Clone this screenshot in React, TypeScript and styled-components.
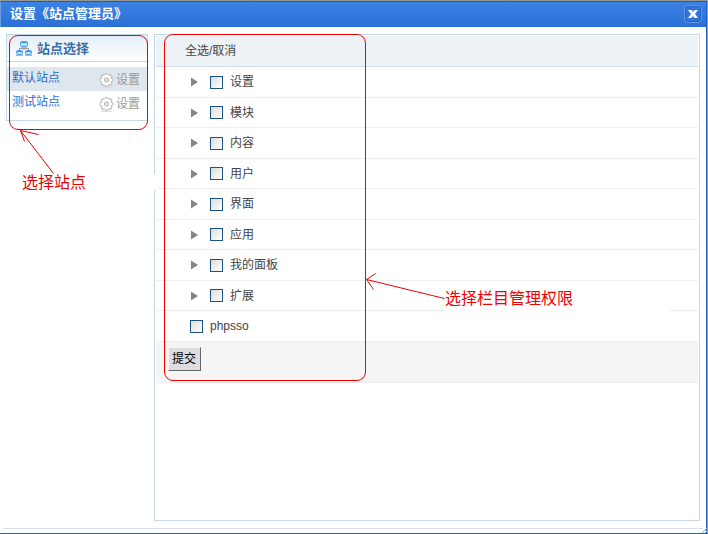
import React, { useState } from "react";
import styled, { createGlobalStyle } from "styled-components";

const GlobalStyle = createGlobalStyle`
  * { box-sizing: border-box; }
  body {
    margin: 0;
    background: #fff;
    color: #444;
    font: 12px/16px "Liberation Sans", "Noto Sans CJK SC", sans-serif;
  }
  button, input { font: inherit; margin: 0; }
`;

const Dialog = styled.main`
  position: relative;
  display: flex;
  flex-direction: column;
  min-height: 100vh;
  border-top: 1px solid #969a94;
  border-right: 1px solid #8f9fb4;
  border-bottom: 1px solid #2263b4;
  background: #fff;
  box-shadow: inset -1px 0 #1c63cd;
`;

const TitleBar = styled.header`
  display: flex;
  align-items: center;
  justify-content: space-between;
  height: 26px;
  padding: 0 4px 0 9px;
  border: 1px solid #1a5cb8;
  border-bottom: 0;
  border-left-color: #6c9ee2;
  border-right-color: #1c63cd;
  background: linear-gradient(#3b82e4, #2b6fd4);
  color: #fff;
`;

const Title = styled.h1`
  margin: 0;
  padding-bottom: 2px;
  font-size: 13px;
  line-height: 20px;
  font-weight: bold;
`;

const CloseButton = styled.button`
  display: flex;
  align-items: center;
  justify-content: center;
  width: 18px;
  height: 18px;
  margin-bottom: 2px;
  padding: 0;
  border: 1px solid #6496e4;
  border-radius: 4px;
  background: #2f74d8;
  box-shadow: inset 0 0 0 1px #2263c4;
`;

const Content = styled.div`
  flex: 1;
  display: flex;
  align-items: stretch;
  gap: 6px;
  padding: 7px 7px 7px 6px;
`;

const Sidebar = styled.nav`
  position: relative;
  align-self: flex-start;
  flex: none;
  width: 142px;
  padding-bottom: 5px;
  border: 1px solid #c5d8e8;
`;

const SidebarTitle = styled.h2`
  display: flex;
  align-items: center;
  gap: 5px;
  height: 27px;
  margin: 0 0 5px;
  padding: 2px 9px 0;
  border-bottom: 1px solid #c5d8e8;
  background: linear-gradient(#e2ecf7, #fff);
  color: #3a6ea5;
  font-size: 13px;
  line-height: 20px;
`;

const SiteRow = styled.div<{ $active?: boolean }>`
  display: flex;
  align-items: center;
  justify-content: space-between;
  height: 24px;
  padding: 0 7px 0 5px;
  background: ${(p) => (p.$active ? "#dfe7ee" : "transparent")};
`;

const SiteLink = styled.a`
  padding-bottom: 2px;
  color: #2a6fd0;
  text-decoration: none;
`;

const SettingLink = styled.a`
  display: flex;
  align-items: center;
  gap: 2px;
  padding-top: 2px;
  color: #999;
  text-decoration: none;
`;

const Panel = styled.form`
  position: relative;
  flex: 1;
  min-width: 0;
  padding: 1px;
  border: 1px solid #c5d8e8;
`;

const PanelHead = styled.div`
  display: flex;
  align-items: center;
  height: 31px;
  padding-left: 29px;
  border-bottom: 1px solid #d0dce8;
  background: #edf2f6;
`;

const PlainButton = styled.button`
  display: flex;
  padding: 0;
  border: 0;
  background: none;
  color: inherit;
`;

const Tree = styled.ul`
  margin: 0;
  padding: 0;
  list-style: none;
`;

const TreeRow = styled.li`
  display: flex;
  align-items: center;
  gap: 12px;
  height: 30px;
  padding-left: 34px;
  border-bottom: 1px solid #eee;
  &:nth-child(odd) { height: 31px; }
`;

const CheckLabel = styled.label`
  display: flex;
  align-items: center;
  gap: 7px;
`;

const CheckBox = styled.input.attrs({ type: "checkbox" })`
  appearance: none;
  width: 13px;
  height: 13px;
  border: 1px solid #1c5180;
  background: linear-gradient(135deg, #dcdcd7, #fff);
  &:checked {
    background: #21a121;
    box-shadow: inset 0 0 0 2px #fff;
  }
`;

const PanelFoot = styled.div`
  height: 41px;
  padding: 5px 12px;
  border-bottom: 1px solid #eee;
  background: #f5f5f5;
`;

const SubmitButton = styled.button`
  height: 24px;
  padding: 0 4px 0 3px;
  border: 1px solid;
  border-color: #f5f5f5 #666 #666 #f5f5f5;
  background: #ddd;
  color: #000;
`;

const StatusBar = styled.footer`
  height: 5px;
  margin: 0 4px 0 3px;
  border-top: 1px solid #d5deea;
`;

const Grip = styled.svg`
  position: absolute;
  right: 0;
  bottom: 0;
`;

const SiteOutline = styled.div`
  position: absolute;
  inset: 0 -1px -10px 2px;
  border: 1px solid #f00000;
  border-radius: 9px;
  pointer-events: none;
`;

const TreeOutline = styled.div`
  position: absolute;
  top: -1px;
  left: 9px;
  width: 202px;
  height: 347px;
  border: 1px solid #f00000;
  border-radius: 9px;
  pointer-events: none;
`;

const Note = styled.p<{ $x: number; $y: number; $w: number; $h: number }>`
  position: absolute;
  left: ${(p) => p.$x}px;
  top: ${(p) => p.$y}px;
  width: ${(p) => p.$w}px;
  height: ${(p) => p.$h}px;
  margin: 0;
  background: #fff;
  color: #f00000;
  font-size: 16px;
  line-height: 18px;
  white-space: nowrap;
`;

const Arrows = styled.svg`
  position: absolute;
  top: -1px;
  left: 0;
  pointer-events: none;
`;

const SiteIcon = () => (
  <svg width="16" height="16" viewBox="0 0 16 16" aria-hidden="true">
    <path d="M8 6v3M3.500 10V7.500h9V10" fill="none" stroke="#999" />
    <g fill="#b4e2fb" stroke="#4c9fe0">
      <rect x="4.500" y="0.500" width="7" height="5" rx="1" />
      <rect x="0.500" y="9.500" width="6" height="4" rx="1" />
      <rect x="9.500" y="9.500" width="6" height="4" rx="1" />
    </g>
    <path d="M5 1.500h6M1 10.500h5M10 10.500h5" stroke="#3d98ea" />
    <path d="M0 14.500h7M9 14.500h7M5 6.500h6" stroke="#b5b9bc" />
  </svg>
);

const teeth = [0, 45, 90, 135, 180, 225, 270, 315];

const GearIcon = () => (
  <svg width="15" height="15" viewBox="0 0 15 15" aria-hidden="true">
    <path d="M2 14.500h11" stroke="#ddd" />
    <g fill="#fff" stroke="#b4b4b4">
      {teeth.map((angle) => (
        <rect key={angle} x="6" y="0.500" width="3" height="4" rx="0.800" transform={`rotate(${angle} 7.500 7)`} />
      ))}
    </g>
    <circle cx="7.500" cy="7" r="5" fill="#fff" />
    <circle cx="7.500" cy="7" r="2.200" fill="#e2e2e2" stroke="#b8b8b8" />
  </svg>
);

const sections = ["设置", "模块", "内容", "用户", "界面", "应用", "我的面板", "扩展"];
const entries = [...sections, "phpsso"];
const sites = ["默认站点", "测试站点"];

export default function App() {
  const [checked, setChecked] = useState<string[]>([]);
  const toggle = (name: string) =>
    setChecked((now) => (now.includes(name) ? now.filter((n) => n !== name) : [...now, name]));
  const toggleAll = () => setChecked((now) => (now.length === entries.length ? [] : entries));

  return (
    <>
      <GlobalStyle />
      <Dialog>
        <TitleBar>
          <Title>设置《站点管理员》</Title>
          <CloseButton type="button" aria-label="关闭">
            <svg width="10" height="8" viewBox="0 0 10 8" aria-hidden="true">
              <path d="M0 0h3.500L5 2l1.500-2H10L7 4l3 4H6.500L5 6 3.500 8H0l3-4z" fill="#fff" />
            </svg>
          </CloseButton>
        </TitleBar>
        <Content>
          <Sidebar>
            <SidebarTitle>
              <SiteIcon />
              站点选择
            </SidebarTitle>
            {sites.map((site, i) => (
              <SiteRow key={site} $active={i === 0}>
                <SiteLink href="#">{site}</SiteLink>
                <SettingLink href="#">
                  <GearIcon />
                  设置
                </SettingLink>
              </SiteRow>
            ))}
            <SiteOutline />
          </Sidebar>
          <Panel onSubmit={(e) => e.preventDefault()}>
            <PanelHead>
              <PlainButton type="button" onClick={toggleAll}>全选/取消</PlainButton>
            </PanelHead>
            <Tree>
              {entries.map((name) => (
                <TreeRow key={name}>
                  {name !== "phpsso" && (
                    <PlainButton type="button" aria-label={"展开" + name}>
                      <svg width="8" height="10" viewBox="0 0 8 10" aria-hidden="true">
                        <path d="M1 0.500 8 5 1 9.500z" fill="#858585" />
                      </svg>
                    </PlainButton>
                  )}
                  <CheckLabel>
                    <CheckBox checked={checked.includes(name)} onChange={() => toggle(name)} />
                    {name}
                  </CheckLabel>
                </TreeRow>
              ))}
            </Tree>
            <PanelFoot>
              <SubmitButton type="submit">提交</SubmitButton>
            </PanelFoot>
            <TreeOutline />
          </Panel>
        </Content>
        <StatusBar />
        <Grip width="5" height="5" viewBox="0 0 5 5" aria-hidden="true">
          <path d="M0 5 5 0M3 5 5 3" stroke="#8ea4cf" />
        </Grip>
        <Note $x={22} $y={173} $w={137} $h={16}>选择站点</Note>
        <Note $x={445} $y={289} $w={225} $h={22}>选择栏目管理权限</Note>
        <Arrows width="450" height="310" viewBox="0 0 450 310" aria-hidden="true">
          <g fill="none" stroke="#f00000">
            <path d="M53.500 173.500 20.500 130.500M24.500 141.500l-4-11 18 4" />
            <path d="M444.500 298.500l-78-19M375.500 273.500l-9 6 7 10" />
          </g>
        </Arrows>
      </Dialog>
    </>
  );
}
